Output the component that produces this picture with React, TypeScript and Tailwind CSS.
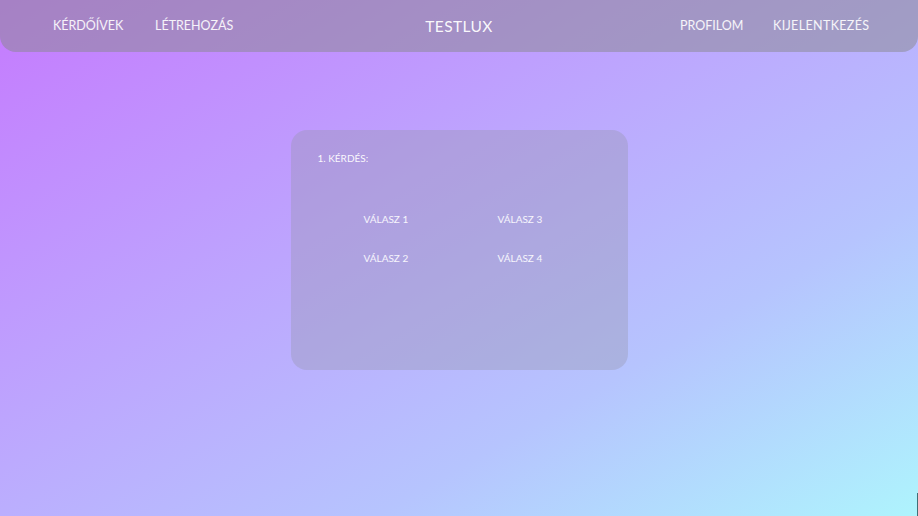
export default function App() {
  const font = { fontFamily: '"Lato", "Noto Sans", sans-serif' };
  return (
    <div
      className="relative w-full h-[516px] overflow-hidden bg-[linear-gradient(150deg,#c57afe_0%,#bcaafe_45%,#b6c4fe_70%,#aef4fd_100%)] text-white"
      style={font}
    >
      <nav className="grid grid-cols-3 items-center h-[52px] rounded-b-2xl bg-[rgba(136,136,140,0.5)] pt-[1px]">
        <div className="flex items-center pl-[53px] text-[12.5px] text-white/90">
          <span className="w-[102px]">KÉRDŐÍVEK</span>
          <span>LÉTREHOZÁS</span>
        </div>
        <div className="text-center text-[15.5px] tracking-[0.4px] text-white/95">TESTLUX</div>
        <div className="flex items-center justify-end pr-[49px] text-[12.5px] text-white/90">
          <span className="w-[93px]">PROFILOM</span>
          <span className="w-[96px] tracking-[0.35px]">KIJELENTKEZÉS</span>
        </div>
      </nav>
      <div className="mx-auto mt-[78px] w-[337px] h-[240px] rounded-2xl bg-[rgba(150,150,172,0.36)] pl-[27px] pt-[22px]">
        <div className="text-[10px] leading-[12px] text-white/95">1. KÉRDÉS:</div>
        <div className="mt-[49px] ml-[46px] grid grid-cols-[134px_auto] gap-y-[27px] text-[10px] leading-[12px] text-white/90">
          <span>VÁLASZ 1</span>
          <span>VÁLASZ 3</span>
          <span>VÁLASZ 2</span>
          <span>VÁLASZ 4</span>
        </div>
      </div>
      <div className="absolute right-0 bottom-0 w-px h-[23px] bg-[#3f6f77]" />
    </div>
  );
}
